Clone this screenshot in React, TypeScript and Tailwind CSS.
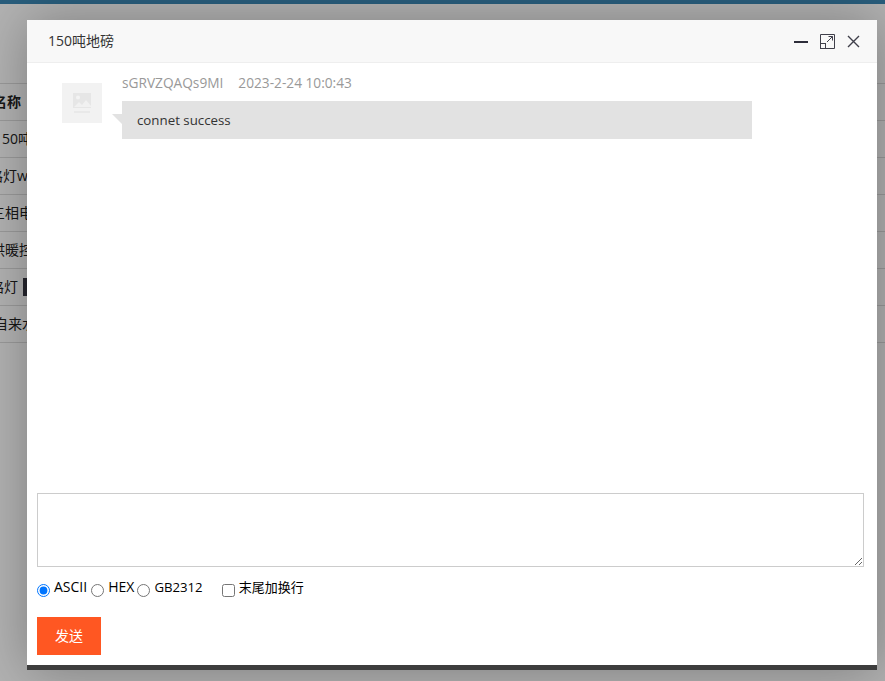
const rows = [
  { name: '150吨地磅', offset: '-ml-[6px]' },
  { name: '路灯wifi', offset: '-ml-[11px]' },
  { name: '三相电表', offset: '-ml-[9px]' },
  { name: '供暖控制', offset: '-ml-[9px]' },
  { name: '路灯', offset: '-ml-[10px]', badge: true },
  { name: '自来水表', offset: '-ml-[6px]' },
];

function DeviceList() {
  return (
    <div className="h-[681px] overflow-hidden bg-white">
      <div className="h-1 bg-[#3b87b3]" />
      <div className="pt-[79px] text-sm text-[#222]">
        <div className="h-[38px] border-y border-[#ddd] flex items-center font-bold">
          <span className="-ml-[7px]">名称</span>
        </div>
        {rows.map((row) => (
          <div key={row.name} className="h-[37px] border-b border-[#ddd] flex items-center whitespace-nowrap">
            <span className={row.offset}>{row.name}</span>
            {row.badge && <span className="ml-[5px] w-8 h-[18px] bg-[#373742]" />}
          </div>
        ))}
      </div>
    </div>
  );
}

function PlaceholderImage() {
  return (
    <div className="w-10 h-10 bg-[#f2f2f2] flex items-center justify-center shrink-0">
      <svg width="20" height="24" viewBox="0 0 20 24" fill="none">
        <rect x="1" y="2" width="18" height="15" fill="#e6e6e6" />
        <circle cx="6" cy="6.5" r="2" fill="#f3f3f3" />
        <path d="M2 16l5-5 3 3 4-5 5 6v1H2z" fill="#f1f1f1" />
        <rect x="2" y="20" width="16" height="2" fill="#e9e9e9" />
      </svg>
    </div>
  );
}

function ChatDialog() {
  return (
    <div className="absolute left-[27px] top-5 w-[850px] h-[650px] bg-white border-b-[5px] border-[#3d3d3d] shadow-[1px_1px_50px_rgba(0,0,0,0.3)] flex flex-col">
      <div className="h-[43px] shrink-0 bg-[#f8f8f8] border-b border-[#eee] flex items-center pl-[21px] pr-[17px] text-sm text-[#333]">
        <span className="flex-1">150吨地磅</span>
        <svg width="14" height="14" viewBox="0 0 14 14" className="mr-3 mt-[2px]">
          <rect y="6" width="14" height="2" fill="#2d2d3a" />
        </svg>
        <svg width="15" height="15" viewBox="0 0 15 15" fill="none" stroke="#3f3f4a" className="mr-3">
          <path d="M.5 9V.5h14v14H6" />
          <rect x=".5" y="9.5" width="5" height="5" />
          <path d="M7 8l5.5-5.5M8.5 2.5h4v4" />
        </svg>
        <svg width="13" height="13" viewBox="0 0 13 13" fill="none" stroke="#3f3f4a" strokeWidth="1.4">
          <path d="M1 1l11 11M12 1L1 12" />
        </svg>
      </div>

      <div className="flex-1 pl-[35px] pt-[9px]">
        <div className="flex gap-5">
          <div className="pt-[11px]">
            <PlaceholderImage />
          </div>
          <div>
            <div className="flex gap-[15px] text-[13.7px] leading-[22px] text-[#999]">
              <span>sGRVZQAQs9MI</span>
              <span>2023-2-24 10:0:43</span>
            </div>
            <div className="relative mt-[7px] w-[630px] h-[38px] bg-[#e2e2e2] pl-[15px] pt-[2px] flex items-center text-[13.3px] text-[#333]">
              <span className="absolute -left-[10px] top-[13px] w-0 h-0 border-t-[10px] border-t-[#e2e2e2] border-l-[10px] border-l-transparent" />
              connet success
            </div>
          </div>
        </div>
      </div>

      <div className="pl-[10px] pr-[13px] pb-[10px]">
        <textarea className="block w-full h-[74px] border border-[#ccc] bg-white" />
        <div className="flex items-center h-[20px] mt-[10px] text-sm text-black">
          <input type="radio" name="encoding" defaultChecked className="w-[13px] h-[13px] mt-[6px] mr-[4px] ml-0" />
          <span className="mr-[4px]">ASCII</span>
          <input type="radio" name="encoding" className="w-[13px] h-[13px] mt-[6px] mr-[4px]" />
          <span className="mr-[3px]">HEX</span>
          <input type="radio" name="encoding" className="w-[13px] h-[13px] mt-[6px] mr-[4px]" />
          <span className="mr-[19px] text-[13.2px]">GB2312</span>
          <input type="checkbox" className="w-[13px] h-[13px] mt-[6px] mr-[4px]" />
          <span className="text-[13px]">末尾加换行</span>
        </div>
        <button type="button" className="mt-[20px] w-16 h-[38px] bg-[#ff5722] text-white text-sm block">
          发送
        </button>
      </div>
    </div>
  );
}

export default function App() {
  return (
    <div className="relative h-[681px] overflow-hidden font-['Open_Sans','Noto_Sans_CJK_SC',sans-serif]">
      <DeviceList />
      <div className="absolute inset-0 bg-black/30" />
      <ChatDialog />
    </div>
  );
}
